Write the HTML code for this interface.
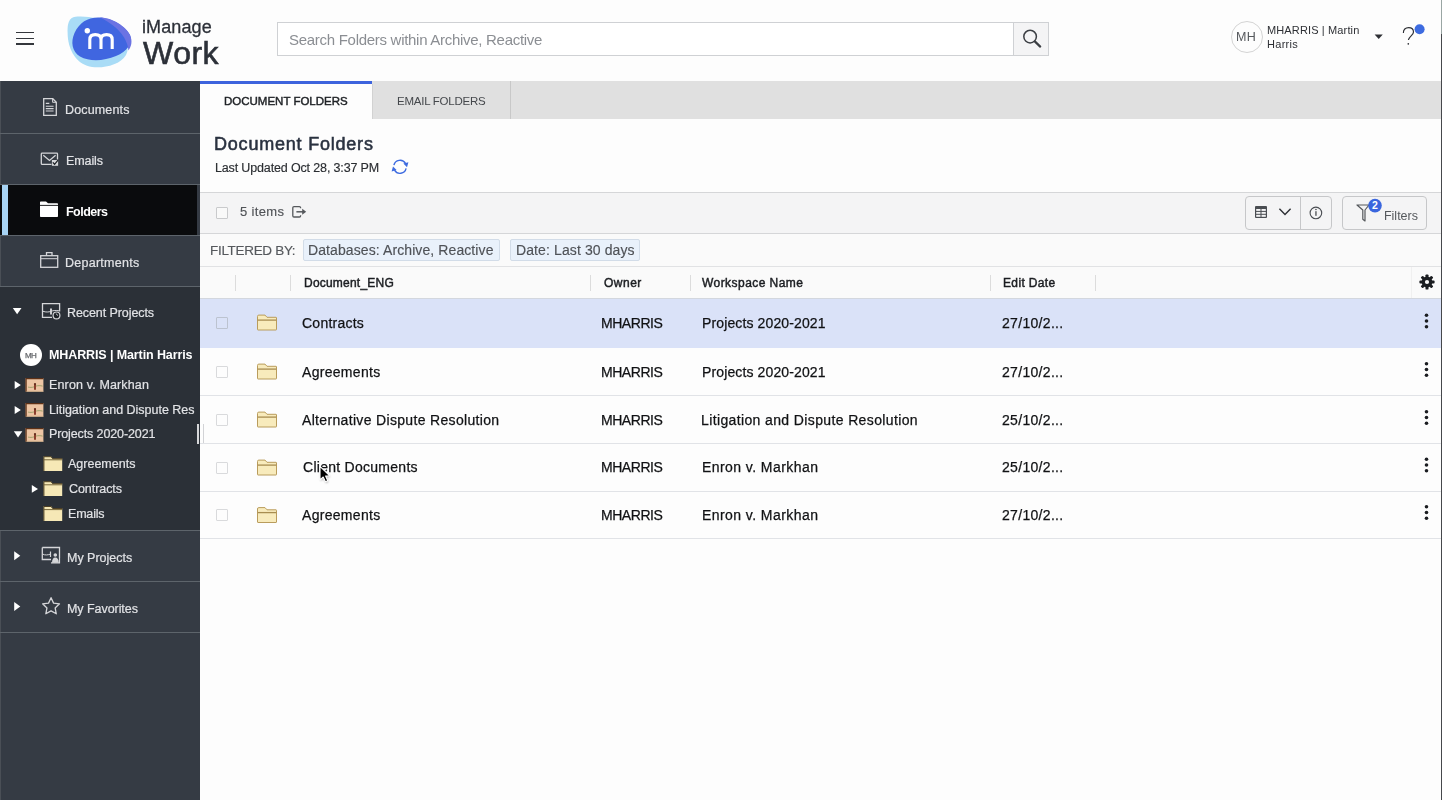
<!DOCTYPE html>
<html><head><meta charset="utf-8">
<style>
*{box-sizing:border-box;margin:0;padding:0}
html,body{width:1442px;height:800px;overflow:hidden;background:#fdfdfd;font-family:"Liberation Sans",sans-serif}
.a{position:absolute}
.t{position:absolute;line-height:1;white-space:nowrap;will-change:transform}
.sep{position:absolute;left:0;width:200px;height:1px;background:#5d646b}
</style></head>
<body>

<!-- HEADER -->
<div class="a" style="left:0;top:0;width:1442px;height:81px;background:#fdfdfd"></div>
<div class="a" style="left:16px;top:31.8px;width:18px;height:1.6px;background:#34373c"></div>
<div class="a" style="left:16px;top:37.6px;width:18px;height:1.6px;background:#34373c"></div>
<div class="a" style="left:16px;top:43.4px;width:18px;height:1.6px;background:#34373c"></div>

<!-- search -->
<div class="a" style="left:277px;top:22px;width:737px;height:34px;border:1px solid #cfd1d4;background:#fff"></div>
<div class="a" style="left:1013px;top:22px;width:36px;height:34px;border:1px solid #cfd1d4;background:#f4f4f5"></div>

<!-- user -->
<div class="a" style="left:1231px;top:21px;width:32px;height:32px;border:1px solid #d4d4d4;border-radius:50%"></div>


<!-- logo -->
<svg class="a" style="left:0;top:0" width="240" height="80" viewBox="0 0 240 80">
<path d="M74 17 C86 15.5 101 18 113 26 C125 34 131 45 126 55 C120 65 104 68.5 92 67 C78 65 70 53 68 39 C67 28 67 19 74 17 Z" fill="#a9dcf6"/>
<path d="M98 17.5 C112 17.5 126 27 130 35 C133.5 43 127 51.5 116 56 C104 61 90 62 80 56.5 C72 51.5 70.5 42 74.5 33 C79.5 22.5 87.5 17.5 98 17.5 Z" fill="#4066e0"/>
<path d="M100 17.6 C113 17.6 126 27 130 35 C133 41.5 131 47 128.5 50.5 C127.5 40 120 27 100 17.6 Z" fill="#6b73e3"/>
<path d="M89.8 49 V39.5 C89.8 36 92 34.6 95.3 34.6 C98.8 34.6 101 36 101 39.5 V49 M101 39.5 C101 36 103.2 34.6 106.6 34.6 C110 34.6 112.2 36 112.2 39.5 V49" stroke="#fff" stroke-width="3.1" fill="none"/>
<circle cx="87.3" cy="30.8" r="2.7" fill="#fff"/>
</svg>

<div class="t" style="left:142px;top:18px;font-size:18px;color:#2c3038;letter-spacing:0.1px;-webkit-text-stroke:0.3px #2c3038">iManage</div>
<div class="t" style="left:143px;top:37px;font-size:32px;color:#2c3038;letter-spacing:0.5px;-webkit-text-stroke:0.6px #2c3038">Work</div>
<!-- search icon -->
<svg class="a" style="left:1013px;top:22px" width="36" height="34" viewBox="1013 22 36 34">
<circle cx="1030.1" cy="36.6" r="6.3" stroke="#3b3e43" stroke-width="1.5" fill="none"/>
<path d="M1034.8 41.4 L1040.2 46.6" stroke="#3b3e43" stroke-width="2.2" stroke-linecap="round"/>
</svg>
<svg class="a" style="left:1370px;top:20px" width="72" height="40" viewBox="1370 20 72 40">
<path d="M1374.6 34.5 H1382.8 L1378.7 39 Z" fill="#2e3035"/>
<path d="M1403.4 33 C1403.2 29.6 1405.5 27.6 1408.6 27.6 C1411.6 27.6 1413.5 29.5 1413.5 32 C1413.5 35.2 1409.2 36.4 1408.4 40" stroke="#2e3035" stroke-width="1.15" fill="none"/>
<circle cx="1408.3" cy="43.8" r="0.85" fill="#2e3035"/>
<circle cx="1419.6" cy="29.2" r="5" fill="#3d6be0"/>
</svg>

<!-- SIDEBAR -->
<div class="a" style="left:0;top:81px;width:200px;height:719px;background:#353b44"></div>
<div class="a" style="left:0;top:81px;width:1px;height:719px;background:#4a4f56"></div>
<div class="sep" style="top:133px"></div>
<div class="sep" style="top:184px"></div>
<div class="a" style="left:0;top:185px;width:197px;height:50px;background:#0a0b0d"></div>
<div class="a" style="left:2px;top:185px;width:6px;height:50px;background:#a7d3f4"></div>
<div class="sep" style="top:235px"></div>
<div class="sep" style="top:286px"></div>
<div class="a" style="left:0;top:287px;width:200px;height:243px;background:#2b3037"></div>
<div class="sep" style="top:530px"></div>
<div class="sep" style="top:581px"></div>
<div class="sep" style="top:632px"></div>
<div class="a" style="left:197px;top:424px;width:1.5px;height:20px;background:#d6d7d9"></div>


<svg class="a" style="left:0;top:81px" width="200" height="719" viewBox="0 81 200 719">
<g stroke="#d5d6d9" fill="none" stroke-width="1.3">
 <!-- documents -->
 <path d="M43.7 98.7 H52.8 L56.3 102.2 V115.3 H43.7 Z"/>
 <path d="M52.6 98.8 V102.3 H56.2" stroke-width="1"/>
 <path d="M45.8 103.4 H49.3 M45.8 106.2 H53.6 M45.8 108.6 H53.6 M45.8 111 H53.6" stroke-width="1.1"/>
 <!-- emails -->
 <path d="M51.5 164.3 H42.2 Q41.3 164.3 41.3 163.4 V154 Q41.3 153.2 42.2 153.2 H56.7 Q57.5 153.2 57.5 154 V159.5"/>
 <path d="M43.3 155.3 L49.5 160.4 L55.6 155.3"/>
 <!-- departments -->
 <rect x="40.7" y="255.7" width="17" height="11.6"/>
 <path d="M46.5 255.6 V252.6 H52 V255.6"/>
 <path d="M41 258.7 H57.5" stroke-width="1"/>
 <!-- recent projects -->
 <path d="M52 317.3 H42.5 V303.6 H59.6 V311.5"/>
 <path d="M43 311.3 C46 312.3 48.5 312.2 51 311.3 C53.5 310.4 56 310.2 59 310.8" stroke-width="1"/>
 <path d="M51 308.6 V314.6" stroke-width="1.9"/>
 <circle cx="56.5" cy="315.4" r="3.4" fill="#1e2227" stroke-width="1.2"/>
 <path d="M56.3 313.6 L57.6 315.6" stroke-width="1"/>
 <!-- my projects -->
 <path d="M42.3 547.5 H59.5 V558 M42.3 547.5 V559.5 H51"/>
 <path d="M42.5 554 C45 555.5 48 555 51 554" stroke-width="1"/>
 <path d="M50.5 551.5 V557" stroke-width="1.2"/>
 <!-- star -->
 <path d="M51.05 597.70 L53.58 603.12 L59.51 603.85 L55.14 607.93 L56.28 613.80 L51.05 610.90 L45.82 613.80 L46.96 607.93 L42.59 603.85 L48.52 603.12 Z" stroke-linejoin="round"/>
</g>
<!-- emails check square -->
<rect x="51.9" y="160" width="6.2" height="5.8" fill="#d5d6d9"/>
<path d="M52.8 162.4 L54.6 164.3 L58 160.2" stroke="#1e2227" stroke-width="1.3" fill="none"/>
<!-- folder white -->
<path d="M40.8 201.4 H46 L48 203.2 H57.2 Q58 203.2 58 204 V216.2 Q58 217 57.2 217 H40.8 Q40 217 40 216.2 V202.2 Q40 201.4 40.8 201.4 Z" fill="#fff"/>
<path d="M40 205.4 H58" stroke="#0a0b0d" stroke-width="0.9"/>
<!-- my projects person -->
<circle cx="55.3" cy="555" r="1.8" fill="#d5d6d9"/>
<path d="M52 562.8 C52 559.5 53.2 557.5 55.3 557.5 C57.4 557.5 58.8 559.5 58.8 562.8 Z" fill="#d5d6d9"/>
<path d="M59.5 558 V562.8 H51" stroke="#d5d6d9" stroke-width="1.2" fill="none"/>
<!-- triangles -->
<g fill="#fff">
 <path d="M12.8 308 H21.5 L17.15 314.3 Z"/>
 <path d="M14.2 551.3 L20.3 555.75 L14.2 560.2 Z"/>
 <path d="M14.2 602 L20.3 606.45 L14.2 610.9 Z"/>
 <path d="M14.7 381 L20.9 385 L14.7 389 Z"/>
 <path d="M14.7 406 L20.9 410 L14.7 414 Z"/>
 <path d="M13.8 431.3 H22.3 L18.05 437.5 Z"/>
 <path d="M31.8 485 L38 488.9 L31.8 492.8 Z"/>
</g>
<!-- MH avatar -->
<circle cx="31" cy="355" r="11" fill="#fff"/>
</svg>
<svg class="a" style="left:0;top:370px" width="200" height="160" viewBox="0 370 200 160">
<defs>
 <g id="ws">
  <rect x="0" y="0" width="17.8" height="13.6" fill="#edc5a4"/>
  <path d="M0.5 13.6 V0.6 H17.8" stroke="#5e3116" stroke-width="1.2" fill="none"/>
  <path d="M2.5 9 C4.5 9.4 6.5 9.4 8.4 8.8 M10.4 8 C12.5 7.4 14.5 7.4 17 8" stroke="#7d9152" stroke-width="0.7" fill="none"/>
  <path d="M9.4 6.2 V11.6" stroke="#7a2618" stroke-width="1.7"/>
  <circle cx="9.4" cy="6" r="1.1" fill="#5e2a1a"/>
  <path d="M1 13.2 H17.8" stroke="#c9ac86" stroke-width="0.8"/>
 </g>
 <g id="tf">
  <path d="M0 0.3 H7.5 L9 2.3 H18.6 V14.9 H0 Z" fill="#f6e8b6"/>
  <path d="M0.3 14.9 V0.5 H7.5 L9 2.5 H18.6" stroke="#4e3f22" stroke-width="1" fill="none"/>
  <path d="M0.3 3.6 H18.6" stroke="#6b5a30" stroke-width="0.9"/>
 </g>
</defs>
<use href="#ws" x="25.6" y="378.1"/>
<use href="#ws" x="25.6" y="403.1"/>
<use href="#ws" x="25.6" y="428.1"/>
<use href="#tf" x="43.6" y="456.2"/>
<use href="#tf" x="43.6" y="481.2"/>
<use href="#tf" x="43.6" y="506"/>
</svg>


<!-- MAIN -->
<div class="a" style="left:200px;top:81px;width:1242px;height:719px;background:#fdfdfd"></div>
<!-- tabs -->
<div class="a" style="left:200px;top:81px;width:1241px;height:38px;background:#e0e0e0"></div>
<div class="a" style="left:200px;top:81px;width:172px;height:38px;background:#fdfdfd;border-top:3px solid #3d63dd"></div>
<div class="a" style="left:372px;top:84px;width:1px;height:35px;background:#d2d2d2"></div>
<div class="a" style="left:510px;top:81px;width:1px;height:38px;background:#c8c8c8"></div>

<!-- refresh icon -->
<svg class="a" style="left:388px;top:155px" width="24" height="24" viewBox="388 155 24 24">
<g stroke="#3d6be0" stroke-width="1.4" fill="none">
<path d="M393.9 165.2 A6.3 6.3 0 0 1 405.5 163.4"/>
<path d="M406.1 168.4 A6.3 6.3 0 0 1 394.5 170.2"/>
</g>
<path d="M403.4 163.6 L408.4 162.2 L407 167.2 Z" fill="#3d6be0"/>
<path d="M396.6 170 L391.6 171.4 L393 166.4 Z" fill="#3d6be0"/>
</svg>

<!-- toolbar -->
<div class="a" style="left:200px;top:192px;width:1241px;height:42px;background:#f4f4f5;border-top:1px solid #d5d6d8;border-bottom:1px solid #d5d6d8"></div>
<div class="a" style="left:216px;top:207px;width:12px;height:12px;border:1px solid #c9cacc;border-radius:1px;background:#f9f9f9"></div>
<svg class="a" style="left:288px;top:202px" width="24" height="20" viewBox="288 202 24 20">
<path d="M300.6 208.3 V207.8 Q300.6 206.6 299.4 206.6 H294 Q292.8 206.6 292.8 207.8 V215.8 Q292.8 217 294 217 H299.4 Q300.6 217 300.6 215.8 V215.3" stroke="#55585c" stroke-width="1.3" fill="none"/>
<path d="M296.4 211.8 H303" stroke="#55585c" stroke-width="1.5" fill="none"/>
<path d="M302.2 208.8 L306.2 211.8 L302.2 214.8 Z" fill="#55585c"/>
</svg>
<div class="a" style="left:1245px;top:196px;width:87px;height:34px;border:1px solid #c6c7c9;border-radius:4px;background:#f4f4f5"></div>
<div class="a" style="left:1300px;top:197px;width:1px;height:32px;background:#c6c7c9"></div>
<div class="a" style="left:1342px;top:196px;width:85px;height:34px;border:1px solid #c6c7c9;border-radius:4px;background:#f4f4f5"></div>
<svg class="a" style="left:1245px;top:196px" width="190" height="34" viewBox="1245 196 190 34">
<!-- table icon -->
<rect x="1255" y="206" width="12" height="12" rx="1" fill="#4a4d52"/>
<g fill="#f4f4f5">
<rect x="1256.2" y="209" width="4.3" height="1.9"/><rect x="1261.5" y="209" width="4.3" height="1.9"/>
<rect x="1256.2" y="211.9" width="4.3" height="1.9"/><rect x="1261.5" y="211.9" width="4.3" height="1.9"/>
<rect x="1256.2" y="214.8" width="4.3" height="2"/><rect x="1261.5" y="214.8" width="4.3" height="2"/>
</g>
<path d="M1279.4 208.8 L1285 214.4 L1290.6 208.8" stroke="#2e3035" stroke-width="1.4" fill="none"/>
<circle cx="1315.9" cy="212.9" r="5.8" stroke="#4a4d52" stroke-width="1.1" fill="none"/>
<rect x="1315.3" y="211.2" width="1.3" height="4.6" fill="#4a4d52"/>
<circle cx="1315.95" cy="209.5" r="0.8" fill="#4a4d52"/>
<!-- funnel -->
<path d="M1357 205 H1369 L1365 210 V221 L1362.8 219.2 V210 Z" stroke="#55585c" stroke-width="1.2" fill="none" stroke-linejoin="round"/>
<circle cx="1375" cy="205.6" r="6.8" fill="#3a66de"/>
<text x="1375" y="209.3" font-family="Liberation Sans" font-size="10.5" font-weight="bold" fill="#fff" text-anchor="middle">2</text>
</svg>

<!-- filter row -->
<div class="a" style="left:200px;top:234px;width:1241px;height:33px;background:#fafafa;border-bottom:1px solid #e1e2e4"></div>
<div class="a" style="left:303px;top:239px;width:197px;height:22px;background:#e9f1fb;border:1px solid #d2dce8;border-radius:2px"></div>
<div class="a" style="left:510px;top:239px;width:130px;height:22px;background:#e9f1fb;border:1px solid #d2dce8;border-radius:2px"></div>

<!-- header row -->
<div class="a" style="left:200px;top:267px;width:1241px;height:32px;background:#fafafa;border-bottom:1px solid #d3d7de"></div>
<div class="a" style="left:235px;top:275px;width:1px;height:16px;background:#dcdcdc"></div>
<div class="a" style="left:290px;top:275px;width:1px;height:16px;background:#dcdcdc"></div>
<div class="a" style="left:590px;top:275px;width:1px;height:16px;background:#dcdcdc"></div>
<div class="a" style="left:690px;top:275px;width:1px;height:16px;background:#dcdcdc"></div>
<div class="a" style="left:990px;top:275px;width:1px;height:16px;background:#dcdcdc"></div>
<div class="a" style="left:1095px;top:275px;width:1px;height:16px;background:#dcdcdc"></div>
<div class="a" style="left:1411px;top:267px;width:1px;height:31px;background:#f0f0f0"></div>
<svg class="a" style="left:1417px;top:272px" width="20" height="20" viewBox="1417 272 20 20">
<g transform="translate(1427 282)">
<circle r="5.4" fill="#1b1d21"/>
<g fill="#1b1d21">
<rect x="-1.5" y="-7.6" width="3" height="15.2" rx="0.9"/>
<rect x="-1.5" y="-7.6" width="3" height="15.2" rx="0.9" transform="rotate(45)"/>
<rect x="-1.5" y="-7.6" width="3" height="15.2" rx="0.9" transform="rotate(90)"/>
<rect x="-1.5" y="-7.6" width="3" height="15.2" rx="0.9" transform="rotate(135)"/>
</g>
<circle r="2.1" fill="#fafafa"/>
</g>
</svg>

<!-- rows -->
<div class="a" style="left:203px;top:424px;width:1px;height:19px;background:#d2d3d6"></div>
<div class="a" style="left:200px;top:299px;width:1241px;height:49px;background:#dae2f8"></div>
<div class="a" style="left:200px;top:395px;width:1241px;height:1px;background:#e1e3e7"></div>
<div class="a" style="left:200px;top:443px;width:1241px;height:1px;background:#e1e3e7"></div>
<div class="a" style="left:200px;top:491px;width:1241px;height:1px;background:#e1e3e7"></div>
<div class="a" style="left:200px;top:538px;width:1241px;height:1px;background:#e1e3e7"></div>
<div class="a" style="left:216px;top:317px;width:12px;height:12px;border:1px solid #bcc3d0;border-radius:1px;background:#dae2f8"></div>
<div class="a" style="left:216px;top:366px;width:12px;height:12px;border:1px solid #d9dadc;border-radius:1px;background:#fdfdfd"></div>
<div class="a" style="left:216px;top:414px;width:12px;height:12px;border:1px solid #d9dadc;border-radius:1px;background:#fdfdfd"></div>
<div class="a" style="left:216px;top:462px;width:12px;height:12px;border:1px solid #d9dadc;border-radius:1px;background:#fdfdfd"></div>
<div class="a" style="left:216px;top:509px;width:12px;height:12px;border:1px solid #d9dadc;border-radius:1px;background:#fdfdfd"></div>
<svg class="a" style="left:200px;top:299px" width="1242" height="250" viewBox="200 299 1242 250">
<defs><g id="fd"><path d="M0.5 15 V2 Q0.5 0.6 1.8 0.6 H8 L10 2.8 H19 Q19.5 2.8 19.5 3.4 V15 Q19.5 15.5 19 15.5 H1 Q0.5 15.5 0.5 15 Z" fill="#f8ebbc" stroke="#b99c5c" stroke-width="1"/><path d="M0.8 5.6 H19.2" stroke="#a88d50" stroke-width="1.3"/></g>
<g id="kb" fill="#1b1d21"><circle cx="0" cy="-5.7" r="1.8"/><circle cx="0" cy="0" r="1.8"/><circle cx="0" cy="5.7" r="1.8"/></g></defs>
<use href="#fd" x="257" y="314.5"/>
<use href="#kb" x="1426.5" y="321"/>
<use href="#fd" x="257" y="363.5"/>
<use href="#kb" x="1426.5" y="369.5"/>
<use href="#fd" x="257" y="411.5"/>
<use href="#kb" x="1426.5" y="417.5"/>
<use href="#fd" x="257" y="459.5"/>
<use href="#kb" x="1426.5" y="465"/>
<use href="#fd" x="257" y="507"/>
<use href="#kb" x="1426.5" y="512.5"/>
</svg>
<div class="a" style="left:1441px;top:0;width:1px;height:800px;background:linear-gradient(#9aa6a4 0,#9aa6a4 34px,#46484c 34px)"></div>

<div class="t" style="left:289.44px;top:32.30px;font-size:15px;color:#8b8e93;letter-spacing:-0.286px">Search Folders within Archive, Reactive</div>
<div class="t" style="left:1266.72px;top:25.39px;font-size:11px;color:#2e3035;letter-spacing:0.134px">MHARRIS | Martin</div>
<div class="t" style="left:1266.72px;top:39.19px;font-size:11px;color:#2e3035;letter-spacing:0.288px">Harris</div>
<div class="t" style="left:1236.10px;top:30.52px;font-size:12.5px;color:#55585c;letter-spacing:0.400px">MH</div>
<div class="t" style="left:224.36px;top:95.87px;font-size:11.5px;color:#1f2226;letter-spacing:-0.002px;-webkit-text-stroke:0.45px #1f2226">DOCUMENT FOLDERS</div>
<div class="t" style="left:397.36px;top:95.87px;font-size:11.5px;color:#45484c;letter-spacing:-0.240px">EMAIL FOLDERS</div>
<div class="t" style="left:214.44px;top:134.66px;font-size:18px;color:#2a3240;letter-spacing:0.789px;-webkit-text-stroke:0.55px #2a3240">Document Folders</div>
<div class="t" style="left:215.24px;top:162.32px;font-size:12.5px;color:#2a2d31;letter-spacing:-0.146px;-webkit-text-stroke:0.15px #2a2d31">Last Updated Oct 28, 3:37 PM</div>
<div class="t" style="left:240.36px;top:204.60px;font-size:13px;color:#505357;letter-spacing:0.333px;-webkit-text-stroke:0.15px #505357">5 items</div>
<div class="t" style="left:209.56px;top:244.37px;font-size:13.5px;color:#55585c;letter-spacing:-0.311px;-webkit-text-stroke:0.15px #55585c">FILTERED BY:</div>
<div class="t" style="left:308.10px;top:243.15px;font-size:14px;color:#4f5257;letter-spacing:0.095px;-webkit-text-stroke:0.15px #4f5257">Databases: Archive, Reactive</div>
<div class="t" style="left:515.78px;top:243.15px;font-size:14px;color:#4f5257;letter-spacing:0.109px;-webkit-text-stroke:0.15px #4f5257">Date: Last 30 days</div>
<div class="t" style="left:1383.78px;top:210.02px;font-size:12.5px;color:#55585c;letter-spacing:-0.021px">Filters</div>
<div class="t" style="left:303.58px;top:276.54px;font-size:12px;color:#1b1d21;letter-spacing:0.214px;-webkit-text-stroke:0.45px #1b1d21">Document_ENG</div>
<div class="t" style="left:603.70px;top:276.54px;font-size:12px;color:#1b1d21;letter-spacing:0.500px;-webkit-text-stroke:0.45px #1b1d21">Owner</div>
<div class="t" style="left:702.46px;top:276.54px;font-size:12px;color:#1b1d21;letter-spacing:0.446px;-webkit-text-stroke:0.45px #1b1d21">Workspace Name</div>
<div class="t" style="left:1003.48px;top:276.54px;font-size:12px;color:#1b1d21;letter-spacing:0.360px;-webkit-text-stroke:0.45px #1b1d21">Edit Date</div>
<div class="t" style="left:65.44px;top:104.32px;font-size:12.5px;color:#e2e3e6;letter-spacing:0.150px;-webkit-text-stroke:0.2px #e2e3e6">Documents</div>
<div class="t" style="left:65.78px;top:154.52px;font-size:12.5px;color:#e2e3e6;letter-spacing:-0.096px;-webkit-text-stroke:0.2px #e2e3e6">Emails</div>
<div class="t" style="left:66.36px;top:206.32px;font-size:12.5px;color:#ffffff;font-weight:700;letter-spacing:-0.532px">Folders</div>
<div class="t" style="left:65.22px;top:256.62px;font-size:12.5px;color:#e2e3e6;letter-spacing:0.264px;-webkit-text-stroke:0.2px #e2e3e6">Departments</div>
<div class="t" style="left:66.88px;top:307.02px;font-size:12.5px;color:#e2e3e6;letter-spacing:-0.080px;-webkit-text-stroke:0.2px #e2e3e6">Recent Projects</div>
<div class="t" style="left:25.02px;top:352.13px;font-size:8px;color:#66686c;letter-spacing:-0.720px;-webkit-text-stroke:0.25px #66686c">MH</div>
<div class="t" style="left:49.40px;top:348.52px;font-size:12.5px;color:#ffffff;font-weight:700;letter-spacing:-0.110px">MHARRIS | Martin Harris</div>
<div class="t" style="left:49.44px;top:378.92px;font-size:12.5px;color:#e2e3e6;letter-spacing:0.143px;-webkit-text-stroke:0.2px #e2e3e6">Enron v. Markhan</div>
<div class="t" style="left:49.44px;top:404.12px;font-size:12.5px;color:#e2e3e6;letter-spacing:-0.016px;-webkit-text-stroke:0.2px #e2e3e6">Litigation and Dispute Res</div>
<div class="t" style="left:49.44px;top:427.62px;font-size:12.5px;color:#e2e3e6;letter-spacing:-0.116px;-webkit-text-stroke:0.2px #e2e3e6">Projects 2020-2021</div>
<div class="t" style="left:68.46px;top:458.32px;font-size:12.5px;color:#e2e3e6;-webkit-text-stroke:0.2px #e2e3e6">Agreements</div>
<div class="t" style="left:69.26px;top:483.22px;font-size:12.5px;color:#e2e3e6;letter-spacing:-0.060px;-webkit-text-stroke:0.2px #e2e3e6">Contracts</div>
<div class="t" style="left:68.46px;top:507.82px;font-size:12.5px;color:#e2e3e6;letter-spacing:-0.192px;-webkit-text-stroke:0.2px #e2e3e6">Emails</div>
<div class="t" style="left:67.22px;top:551.52px;font-size:12.5px;color:#e2e3e6;letter-spacing:-0.008px;-webkit-text-stroke:0.2px #e2e3e6">My Projects</div>
<div class="t" style="left:67.22px;top:603.02px;font-size:12.5px;color:#e2e3e6;letter-spacing:-0.055px;-webkit-text-stroke:0.2px #e2e3e6">My Favorites</div>
<div class="t" style="left:302.24px;top:315.85px;font-size:14px;color:#111214;letter-spacing:0.240px;-webkit-text-stroke:0.25px #111214">Contracts</div>
<div class="t" style="left:601.34px;top:315.85px;font-size:14px;color:#111214;letter-spacing:-0.449px;-webkit-text-stroke:0.25px #111214">MHARRIS</div>
<div class="t" style="left:701.78px;top:315.85px;font-size:14px;color:#111214;letter-spacing:0.125px;-webkit-text-stroke:0.25px #111214">Projects 2020-2021</div>
<div class="t" style="left:1002.48px;top:315.85px;font-size:14px;color:#111214;letter-spacing:0.311px;-webkit-text-stroke:0.25px #111214">27/10/2...</div>
<div class="t" style="left:302.02px;top:364.90px;font-size:14px;color:#111214;letter-spacing:0.297px;-webkit-text-stroke:0.25px #111214">Agreements</div>
<div class="t" style="left:601.34px;top:364.90px;font-size:14px;color:#111214;letter-spacing:-0.449px;-webkit-text-stroke:0.25px #111214">MHARRIS</div>
<div class="t" style="left:701.78px;top:364.90px;font-size:14px;color:#111214;letter-spacing:0.125px;-webkit-text-stroke:0.25px #111214">Projects 2020-2021</div>
<div class="t" style="left:1002.48px;top:364.90px;font-size:14px;color:#111214;letter-spacing:0.311px;-webkit-text-stroke:0.25px #111214">27/10/2...</div>
<div class="t" style="left:302.36px;top:412.75px;font-size:14px;color:#111214;letter-spacing:0.331px;-webkit-text-stroke:0.25px #111214">Alternative Dispute Resolution</div>
<div class="t" style="left:601.34px;top:412.75px;font-size:14px;color:#111214;letter-spacing:-0.449px;-webkit-text-stroke:0.25px #111214">MHARRIS</div>
<div class="t" style="left:701.10px;top:412.75px;font-size:14px;color:#111214;letter-spacing:0.374px;-webkit-text-stroke:0.25px #111214">Litigation and Dispute Resolution</div>
<div class="t" style="left:1002.48px;top:412.75px;font-size:14px;color:#111214;letter-spacing:0.311px;-webkit-text-stroke:0.25px #111214">25/10/2...</div>
<div class="t" style="left:302.58px;top:459.65px;font-size:14px;color:#111214;letter-spacing:0.271px;-webkit-text-stroke:0.25px #111214">Client Documents</div>
<div class="t" style="left:601.34px;top:459.65px;font-size:14px;color:#111214;letter-spacing:-0.449px;-webkit-text-stroke:0.25px #111214">MHARRIS</div>
<div class="t" style="left:701.78px;top:459.65px;font-size:14px;color:#111214;letter-spacing:0.431px;-webkit-text-stroke:0.25px #111214">Enron v. Markhan</div>
<div class="t" style="left:1002.48px;top:459.65px;font-size:14px;color:#111214;letter-spacing:0.311px;-webkit-text-stroke:0.25px #111214">25/10/2...</div>
<div class="t" style="left:302.02px;top:507.90px;font-size:14px;color:#111214;letter-spacing:0.297px;-webkit-text-stroke:0.25px #111214">Agreements</div>
<div class="t" style="left:601.34px;top:507.90px;font-size:14px;color:#111214;letter-spacing:-0.449px;-webkit-text-stroke:0.25px #111214">MHARRIS</div>
<div class="t" style="left:701.78px;top:507.90px;font-size:14px;color:#111214;letter-spacing:0.431px;-webkit-text-stroke:0.25px #111214">Enron v. Markhan</div>
<div class="t" style="left:1002.48px;top:507.90px;font-size:14px;color:#111214;letter-spacing:0.311px;-webkit-text-stroke:0.25px #111214">27/10/2...</div>
<svg class="a" style="left:314px;top:462px" width="20" height="24" viewBox="314 462 20 24">
<defs><filter id="sh" x="-50%" y="-50%" width="200%" height="200%"><feGaussianBlur stdDeviation="0.9"/></filter></defs>
<path d="M320.6 467.6 L320.6 481 L323.8 478.2 L326 483 L328.4 482 L326.2 477.3 L330.4 477 Z" fill="#000" opacity="0.35" filter="url(#sh)"/>
<path d="M320 466.4 L320 479.8 L323.2 477 L325.4 481.8 L327.8 480.8 L325.6 476.1 L329.8 475.8 Z" fill="#000" stroke="#fff" stroke-width="1.1" stroke-linejoin="round"/>
</svg>

</body></html>
